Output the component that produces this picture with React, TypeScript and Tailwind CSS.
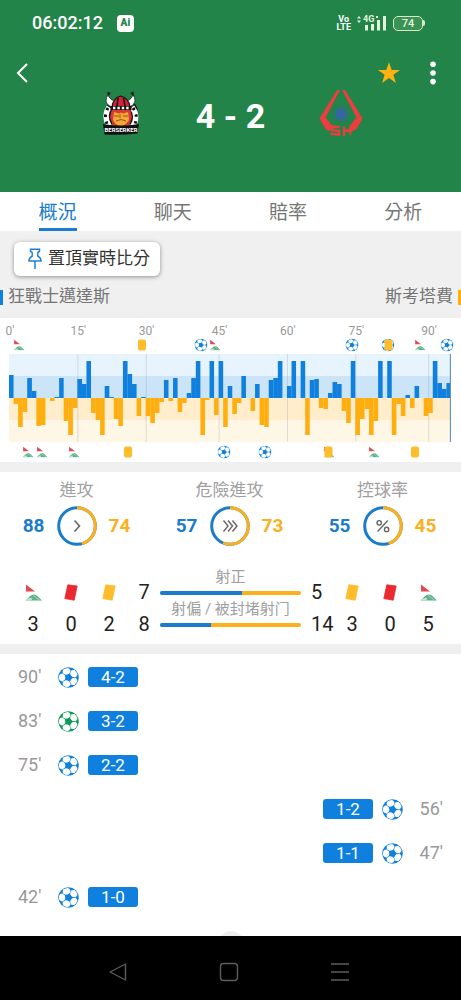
import { useState } from 'react';
import type { ReactNode } from 'react';

type Team = 'home' | 'away';
type MarkerKind = 'corner' | 'card' | 'goal' | 'goalCard' | 'cardCorner';
type Marker = {
    slot: number;
    kind: MarkerKind;
}
type Goal = {
    time: string;
    score: string;
    team: Team;
    penalty?: boolean;
}

const BLUE = '#0f80de';
const ORANGE = '#ffae10';

const TABS = ['概況', '聊天', '賠率', '分析'];

// pressure per minute, positive is home and negative is away
const PRESSURE = [
    23, -6, -29, -14, 20, 7, -28, -27, 0, -3, 1, 20, -23, -37, -10,
    19, 14, 37, -15, -22, -37, 12, 1, -21, -28, 37, 24, 14, -18, 1,
    -18, -25, -15, -4, 18, -3, 20, -14, -5, 5, 20, 37, -37, -2, 37, -17,
    37, -29, 12, -16, -5, 22, 0, -13, 14, -27, -29, 18, 20, 37, 0,
    12, 37, 0, 37, -37, 18, 19, -10, -11, 5, 16, 14, -13, -25, 37,
    -37, -21, -11, -37, -23, 37, 0, 37, -37, -6, -18, 3, -10, 12, 0,
    -18, -15, 37, 15, 9, 15,
];

const TICKS = [
    { slot: 0, label: "0'" },
    { slot: 15, label: "15'" },
    { slot: 30, label: "30'" },
    { slot: 46, label: "45'" },
    { slot: 61, label: "60'" },
    { slot: 76, label: "75'" },
    { slot: 92, label: "90'" },
];

const HOME_MARKERS: Marker[] = [
    { slot: 2, kind: 'corner' },
    { slot: 29, kind: 'card' },
    { slot: 42, kind: 'goal' },
    { slot: 45, kind: 'corner' },
    { slot: 75, kind: 'goal' },
    { slot: 83, kind: 'goalCard' },
    { slot: 90, kind: 'corner' },
    { slot: 96, kind: 'goal' },
];

const AWAY_MARKERS: Marker[] = [
    { slot: 4, kind: 'corner' },
    { slot: 7, kind: 'corner' },
    { slot: 14, kind: 'corner' },
    { slot: 26, kind: 'card' },
    { slot: 47, kind: 'goal' },
    { slot: 56, kind: 'goal' },
    { slot: 70, kind: 'cardCorner' },
    { slot: 80, kind: 'corner' },
    { slot: 89, kind: 'card' },
];

const GOALS: Goal[] = [
    { time: "90'", score: '4-2', team: 'home' },
    { time: "83'", score: '3-2', team: 'home', penalty: true },
    { time: "75'", score: '2-2', team: 'home' },
    { time: "56'", score: '1-2', team: 'away' },
    { time: "47'", score: '1-1', team: 'away' },
    { time: "42'", score: '1-0', team: 'home' },
];

function Ball({ className, color = BLUE }: { className: string; color?: string }) {
    return (
        <svg viewBox="0 0 20 20" className={className}>
            <circle cx="10" cy="10" r="9.8" fill={color} />
            {[180, 252, 324, 36, 108].map((a) => (
                <path
                    key={a}
                    d="M13.4 8 L15.6 6.2 Q17.6 6.2 18.7 7.6 Q19.5 10 18.7 12.4 Q17.6 13.8 15.6 13.8 L13.4 12 Q12.8 10 13.4 8Z"
                    fill="#fff"
                    transform={`rotate(${a} 10 10)`}
                />
            ))}
        </svg>
    );
}

function CornerFlag({ className }: { className: string }) {
    return (
        <svg viewBox="0 0 17 17" className={className}>
            <path d="M1 0.5 L10 7.4 H1Z" fill="#e5484f" />
            <path d="M0.5 16.5 Q3 14.5 4.5 12.5 Q9 8.5 13 12.5 L17 16.5Z" fill="#5bb287" />
            <path d="M1.5 15.8 Q5.5 13 7.5 14.2 L6 16.5 H1Z" fill="#c4e5d3" />
            <path d="M8 11.5 L14.5 16" stroke="#a6d8be" strokeWidth="1" />
        </svg>
    );
}

function Card({ className, color = '#ffbc2b' }: { className: string; color?: string }) {
    return (
        <svg viewBox="0 0 14 17" className={className}>
            <path d="M3.8 0.8 L13.2 2 L10.2 16.2 L0.8 14.6Z" fill={color} stroke={color} strokeWidth="0.8" strokeLinejoin="round" />
        </svg>
    );
}

function SmallCard() {
    return <span className="block h-[11px] w-2 rounded-[2px] bg-[#ffbc2b]" />;
}

function MarkerIcon({ kind }: { kind: MarkerKind }) {
    if (kind === 'corner') return <CornerFlag className="size-[11px]" />;
    if (kind === 'card') return <SmallCard />;
    if (kind === 'goal') return <Ball className="size-[13px]" />;
    if (kind === 'goalCard') {
        return (
            <span className="grid place-items-center *:col-start-1 *:row-start-1">
                <Ball className="size-[13px]" />
                <SmallCard />
            </span>
        );
    }
    return (
        <span className="grid place-items-center *:col-start-1 *:row-start-1">
            <CornerFlag className="size-[11px]" />
            <SmallCard />
        </span>
    );
}

function MarkerRow({ markers }: { markers: Marker[] }) {
    return (
        <div className="relative h-4">
            {markers.map((m) => (
                <span
                    key={m.slot}
                    className="absolute top-1/2 -translate-1/2"
                    style={{ left: `${((m.slot + 0.2) / PRESSURE.length) * 100}%` }}>
                    <MarkerIcon kind={m.kind} />
                </span>
            ))}
        </div>
    );
}

function PressureChart() {
    return (
        <section className="bg-white pt-[3px] pr-2.5 pb-0.5 pl-[9px]">
            <div className="relative h-4">
                {TICKS.map((t) => (
                    <span
                        key={t.slot}
                        className="absolute -translate-x-1/2 text-xs leading-5 text-[#999]"
                        style={{ left: `${((t.slot + 0.2) / PRESSURE.length) * 100}%` }}>
                        {t.label}
                    </span>
                ))}
            </div>
            <MarkerRow markers={HOME_MARKERS} />
            <svg viewBox="0 0 97 88" preserveAspectRatio="none" className="mt-px block h-[88px] w-full">
                <rect width="97" height="22" fill="#e8f4fd" />
                <rect y="22" width="97" height="22" fill="#cce4f7" />
                <rect y="44" width="97" height="22" fill="#ffedcc" />
                <rect y="66" width="97" height="22" fill="#fff7e6" />
                {TICKS.slice(1).map((t) => (
                    <rect key={t.slot} x={t.slot} width="0.22" height="88" fill="#8a93a0" opacity="0.28" />
                ))}
                {PRESSURE.map((v, i) => (
                    <rect
                        key={i}
                        x={i}
                        y={v > 0 ? 44 - v : 44}
                        width={PRESSURE[i + 1] * v > 0 ? 1.02 : 1}
                        height={Math.abs(v)}
                        fill={v > 0 ? BLUE : ORANGE}
                    />
                ))}
                <rect x="96.75" width="0.25" height="88" fill="#5f94c4" />
            </svg>
            <div className="mt-0.5">
                <MarkerRow markers={AWAY_MARKERS} />
            </div>
        </section>
    );
}

function Ring({ label, home, away, children }: { label: string; home: number; away: number; children: ReactNode }) {
    const share = (away / (home + away)) * 100;
    return (
        <div className="flex flex-col items-center">
            <div className="text-[17px] leading-6 text-[#a0a0a0]">{label}</div>
            <div className="mt-1 flex items-center gap-3 text-[19px] font-bold">
                <span className="text-[#1b7ccc]">{home}</span>
                <svg viewBox="0 0 40 40" className="size-10" fill="none">
                    <circle cx="20" cy="20" r="18.3" stroke="#1b7ccc" strokeWidth="3" />
                    <circle
                        cx="20"
                        cy="20"
                        r="18.3"
                        stroke="#fbb01c"
                        strokeWidth="3"
                        pathLength={100}
                        strokeDasharray={`${share} 100`}
                        transform="rotate(-90 20 20)"
                    />
                    {children}
                </svg>
                <span className="text-[#fbb01c]">{away}</span>
            </div>
        </div>
    );
}

function ShotBar({ label, home, away }: { label: string; home: number; away: number }) {
    return (
        <div className="pb-0.5">
            <div className="text-center text-[15px] leading-6 whitespace-nowrap text-[#a0a0a0]">{label}</div>
            <div className="mt-0.5 flex h-1 overflow-hidden rounded-full bg-[#fbb01c]">
                <div className="bg-[#1b7ccc]" style={{ width: `${(home / (home + away)) * 100}%` }} />
            </div>
        </div>
    );
}

function CountColumn({ icon, count }: { icon: ReactNode; count: number }) {
    return (
        <div className="flex w-[38px] flex-col items-center">
            <div className="flex h-8 items-center">{icon}</div>
            <div className="leading-8">{count}</div>
        </div>
    );
}

function Stats() {
    return (
        <section className="bg-white pt-1.5 pb-1">
            <div className="grid grid-cols-3 pr-0.5">
                <Ring label="進攻" home={88} away={74}>
                    <path d="M17.5 14.5 L22.5 20 L17.5 25.5" stroke="#666" strokeWidth="1.6" />
                </Ring>
                <Ring label="危險進攻" home={57} away={73}>
                    <path d="M13.5 14.5 L18 20 L13.5 25.5 M18 14.5 L22.5 20 L18 25.5 M22.5 14.5 L27 20 L22.5 25.5" stroke="#666" strokeWidth="1.4" />
                </Ring>
                <Ring label="控球率" home={55} away={45}>
                    <path d="M24.8 14.5 L14.6 25.5" stroke="#666" strokeWidth="1.4" />
                    <circle cx="16.2" cy="16.8" r="2.2" stroke="#666" strokeWidth="1.4" />
                    <circle cx="23.6" cy="23.4" r="2.2" stroke="#666" strokeWidth="1.4" />
                </Ring>
            </div>

            <div className="mt-[19px] flex items-end px-[14px] text-xl text-[#222]">
                <CountColumn icon={<CornerFlag className="size-[17px]" />} count={3} />
                <CountColumn icon={<Card className="h-[17px]" color="#ea2a30" />} count={0} />
                <CountColumn icon={<Card className="h-[17px]" />} count={2} />
                <div className="w-8 text-center leading-8">
                    <div>7</div>
                    <div>8</div>
                </div>
                <div className="min-w-0 flex-1 pb-[11px]">
                    <ShotBar label="射正" home={7} away={5} />
                    <ShotBar label="射偏 / 被封堵射门" home={8} away={14} />
                </div>
                <div className="w-8 pl-2.5 leading-8">
                    <div>5</div>
                    <div>14</div>
                </div>
                <CountColumn icon={<Card className="h-[17px]" />} count={3} />
                <CountColumn icon={<Card className="h-[17px]" color="#ea2a30" />} count={0} />
                <CountColumn icon={<CornerFlag className="size-[17px]" />} count={5} />
            </div>
        </section>
    );
}

function HomeLogo() {
    return (
        <svg viewBox="0 0 44 46" className="h-[46px] w-11">
            <path d="M7 34 Q2 17 13 11 L33 11 Q42 18 38 34Z" fill="#111" />
            <path d="M9 3 Q7 8 7 11 Q8 16 14 17 L18 11 Q12 11 10 7Z" fill="#fff" stroke="#1b3526" strokeWidth="0.8" />
            <path d="M34 3 Q36 7 36 11 Q35 16 30 17 L26 11 Q31 11 33 7Z" fill="#fff" stroke="#1b3526" strokeWidth="0.8" />
            <path d="M8.5 1.5 L12 3 L8.5 7Z M34.5 1.5 L31 3 L35 7Z" fill="#10251a" />
            <path d="M10 17 Q4 26 10 36 M33 17 Q40 26 34 36" fill="none" stroke="#fff" strokeWidth="5.4" />
            <path d="M9 18 Q4 26 9 36 M34 18 Q40 26 35 36" fill="none" stroke="#111" strokeWidth="3" strokeDasharray="2.4 4.6" />
            <path d="M13 19 L31 19 L33 27 L30 36 H14 L11 27Z" fill="#d93832" />
            <path d="M13 17 Q14 8 21.5 6 Q30 8 31 17Z" fill="#cf2439" stroke="#1a1013" strokeWidth="1.2" />
            <path d="M19 8 L18 16 M24.5 8 L26 16" stroke="#1a1013" strokeWidth="1.6" />
            <rect x="11.5" y="16" width="21" height="4" fill="#171314" />
            <path d="M14 18 H30" stroke="#fff" strokeWidth="2.4" strokeDasharray="2.4 2" />
            <path d="M15 22 L20 23.5 L22 22.5 L24 23.5 L29 22 L30 30 Q26 36 22 36 Q17 36 14 30Z" fill="#f2a737" />
            <path d="M15 26 H20 M24 26 H29 M17 31 Q22 28 27 31 M21 24 V28" stroke="#9f561f" strokeWidth="1" fill="none" />
            <path d="M4 34 Q22 37 40 34 L38.5 43.5 Q22 45.5 5.5 44.5Z" fill="#111" />
            <text x="22" y="42.3" textAnchor="middle" fontSize="6" fontWeight="700" fill="#fff">BERSERKER</text>
        </svg>
    );
}

function AwayLogo() {
    return (
        <svg viewBox="0 0 44 46" className="h-[46px] w-11">
            <path d="M18 0 H21 L6.5 27.5 L13 35.5 L11 41.5 L6.5 39 L0.5 28.5Z" fill="#ee3d3e" />
            <path d="M26 0 H23 L37.5 27.5 L31 35.5 L33 41.5 L37.5 39 L43.5 28.5Z" fill="#ee3d3e" />
            <circle cx="22" cy="24" r="5.5" fill="#3868a3" />
            <path d="M22 16 V32 M14 24 H30 M16 18 L28 30 M28 18 L16 30" stroke="#3664a5" strokeWidth="2.2" strokeDasharray="2 1" />
            <path d="M20.5 37 L13.5 36.5 L13 40 L20 41 V44.8 L11.5 43.5 M25 36.5 V46 M31.5 35.5 V44.5 M25 41 L32 40" fill="none" stroke="#ee3d3e" strokeWidth="2.3" />
        </svg>
    );
}

function StatusBar() {
    return (
        <div className="flex h-[46px] items-center pr-9 pl-8">
            <span className="text-lg font-medium">06:02:12</span>
            <span className="ml-3.5 grid size-[17px] place-items-center rounded-sm bg-white text-[10px] leading-none font-black text-[#228448]">Ai</span>
            <span className="ml-auto text-center text-[9px] leading-2 font-bold">
                Vo
                <br />
                LTE
            </span>
            <svg viewBox="0 0 30 18" className="mr-1.5 ml-1.5 h-[18px] w-[30px]" fill="#e4f5dc">
                <path d="M0 4.5 L2 2 L4 4.5Z M0 6.5 L2 9 L4 6.5Z" />
                <text x="6" y="8" fontSize="9" fontWeight="700">4G</text>
                <path d="M19 2 h2 v2 h-2z M8 11 h3 v5.5 h-3z M14 10 h3 v6.5 h-3z M20 6 h3 v10.5 h-3z M26 2 h3 v14.5 h-3z" />
            </svg>
            <span className="flex items-center">
                <span className="grid h-[15px] w-[30px] place-items-center rounded-[5px] border border-[#d5ecca] bg-[#3c9157] text-[11px] leading-none font-medium text-[#e4f5dc]">74</span>
                <span className="h-1.5 w-0.5 rounded-r-sm bg-[#d5ecca]" />
            </span>
        </div>
    );
}

function GoalRow({ goal }: { goal: Goal }) {
    return (
        <li className={`flex h-11 items-center px-[18px] ${goal.team === 'away' ? 'flex-row-reverse' : ''}`}>
            <span className={`w-10 text-lg text-[#999] ${goal.team === 'away' ? 'text-right' : ''}`}>{goal.time}</span>
            <Ball className="size-[21px]" color={goal.penalty ? '#0b9a58' : BLUE} />
            <span className="mx-[9px] h-5 w-[50px] rounded-[3px] bg-[#0f80de] text-center text-[17px] leading-5 text-white">{goal.score}</span>
        </li>
    );
}

export default function MatchDetail() {
    const [tab, setTab] = useState('概況');
    const [starred, setStarred] = useState(true);
    const [pinned, setPinned] = useState(false);

    return (
        <div className="bg-[#f0f0f0] font-[Roboto,'Noto_Sans_CJK_TC',sans-serif]">
            <header className="bg-[#228448] pb-[50px] text-white">
                <StatusBar />
                <div className="mt-2.5 flex h-[34px] items-center pr-4 pl-2.5">
                    <button aria-label="返回" className="grid size-6 place-items-center">
                        <svg viewBox="0 0 12 20" className="h-5" fill="none" stroke="#fff" strokeWidth="2">
                            <path d="M11 1 L2 10 L11 19" />
                        </svg>
                    </button>
                    <button aria-label="收藏" onClick={() => setStarred(!starred)} className="ml-auto">
                        <svg viewBox="0 0 24 24" className="size-6" fill={starred ? '#ffb211' : '#fff'}>
                            <path d="M12 1.2 L14.7 9 H23 L16.4 13.8 L18.9 22 L12 17 L5.1 22 L7.6 13.8 L1 9 H9.3Z" />
                        </svg>
                    </button>
                    <button aria-label="更多" className="ml-5">
                        <svg viewBox="0 0 24 24" className="size-6" fill="#fff">
                            <circle cx="12" cy="3.2" r="2.8" />
                            <circle cx="12" cy="12" r="2.8" />
                            <circle cx="12" cy="20.6" r="2.8" />
                        </svg>
                    </button>
                </div>
                <div className="flex h-[52px] items-start justify-center">
                    <HomeLogo />
                    <h1 className="w-44 text-center text-[34px] leading-[52px] font-bold">4 - 2</h1>
                    <AwayLogo />
                </div>
            </header>

            <nav className="grid h-[39px] grid-cols-4 justify-items-center bg-white text-[19px] text-[#757575]">
                {TABS.map((t) => (
                    <button
                        key={t}
                        onClick={() => setTab(t)}
                        className={`border-b-3 pt-1.5 ${tab === t ? 'border-[#1b7ccc] text-[#1b7ccc]' : 'border-transparent'}`}>
                        {t}
                    </button>
                ))}
            </nav>

            <div className="px-3.5 pt-[11px]">
                <button
                    onClick={() => setPinned(!pinned)}
                    className="flex h-[34px] items-center rounded-md bg-white pr-2.5 pl-[14px] text-[17px] text-[#333] shadow-[0_1px_4px_rgba(0,0,0,0.4)]">
                    <svg viewBox="0 0 14 22" className="mr-1.5 h-[22px] w-3.5" fill="none" stroke="#1b80d8" strokeWidth="1.5">
                        <path d="M2.5 1.2 H11.5 V3.4 L9.8 4.6 V8.2 Q13 9.8 13 13 H1 Q1 9.8 4.2 8.2 V4.6 L2.5 3.4Z M7 13 V21" />
                    </svg>
                    置頂實時比分
                </button>
            </div>
            <div className="flex h-[42px] items-center justify-between text-[17px] text-[#757575]">
                <span className="flex items-center gap-[5px]">
                    <span className="h-[15px] w-[3px] bg-[#0f80de]" />
                    狂戰士邁達斯
                </span>
                <span className="flex items-center gap-[5px]">
                    斯考塔費
                    <span className="h-[15px] w-[3px] bg-[#ffae10]" />
                </span>
            </div>

            <main className="flex flex-col gap-2.5">
                <PressureChart />
                <Stats />
                <section className="overflow-hidden bg-white">
                    <ul className="pt-px">
                        {GOALS.map((g) => (
                            <GoalRow key={g.time} goal={g} />
                        ))}
                    </ul>
                    <div className="mx-auto mt-3 h-[5px] w-[26px] overflow-hidden">
                        <div className="size-[26px] rounded-full bg-[#eee]" />
                    </div>
                </section>
            </main>

            <footer className="flex h-16 items-center justify-center gap-[75px] bg-black pt-2 pr-1">
                <button aria-label="上一頁" className="grid size-9 place-items-center">
                    <svg viewBox="0 0 20 20" className="size-5" fill="none" stroke="#5c5c5c" strokeWidth="1.4">
                        <path d="M17.5 2 V18 L2 10Z" strokeLinejoin="round" />
                    </svg>
                </button>
                <button aria-label="主畫面" className="grid size-9 place-items-center">
                    <svg viewBox="0 0 20 20" className="size-5" fill="none" stroke="#5c5c5c" strokeWidth="1.4">
                        <rect x="1.5" y="1.5" width="17" height="17" rx="3" />
                    </svg>
                </button>
                <button aria-label="最近" className="grid size-9 place-items-center">
                    <svg viewBox="0 0 20 20" className="size-5" fill="none" stroke="#5c5c5c" strokeWidth="1.4">
                        <path d="M1 2 H19 M1 10 H19 M1 18 H19" />
                    </svg>
                </button>
            </footer>
        </div>
    );
}
